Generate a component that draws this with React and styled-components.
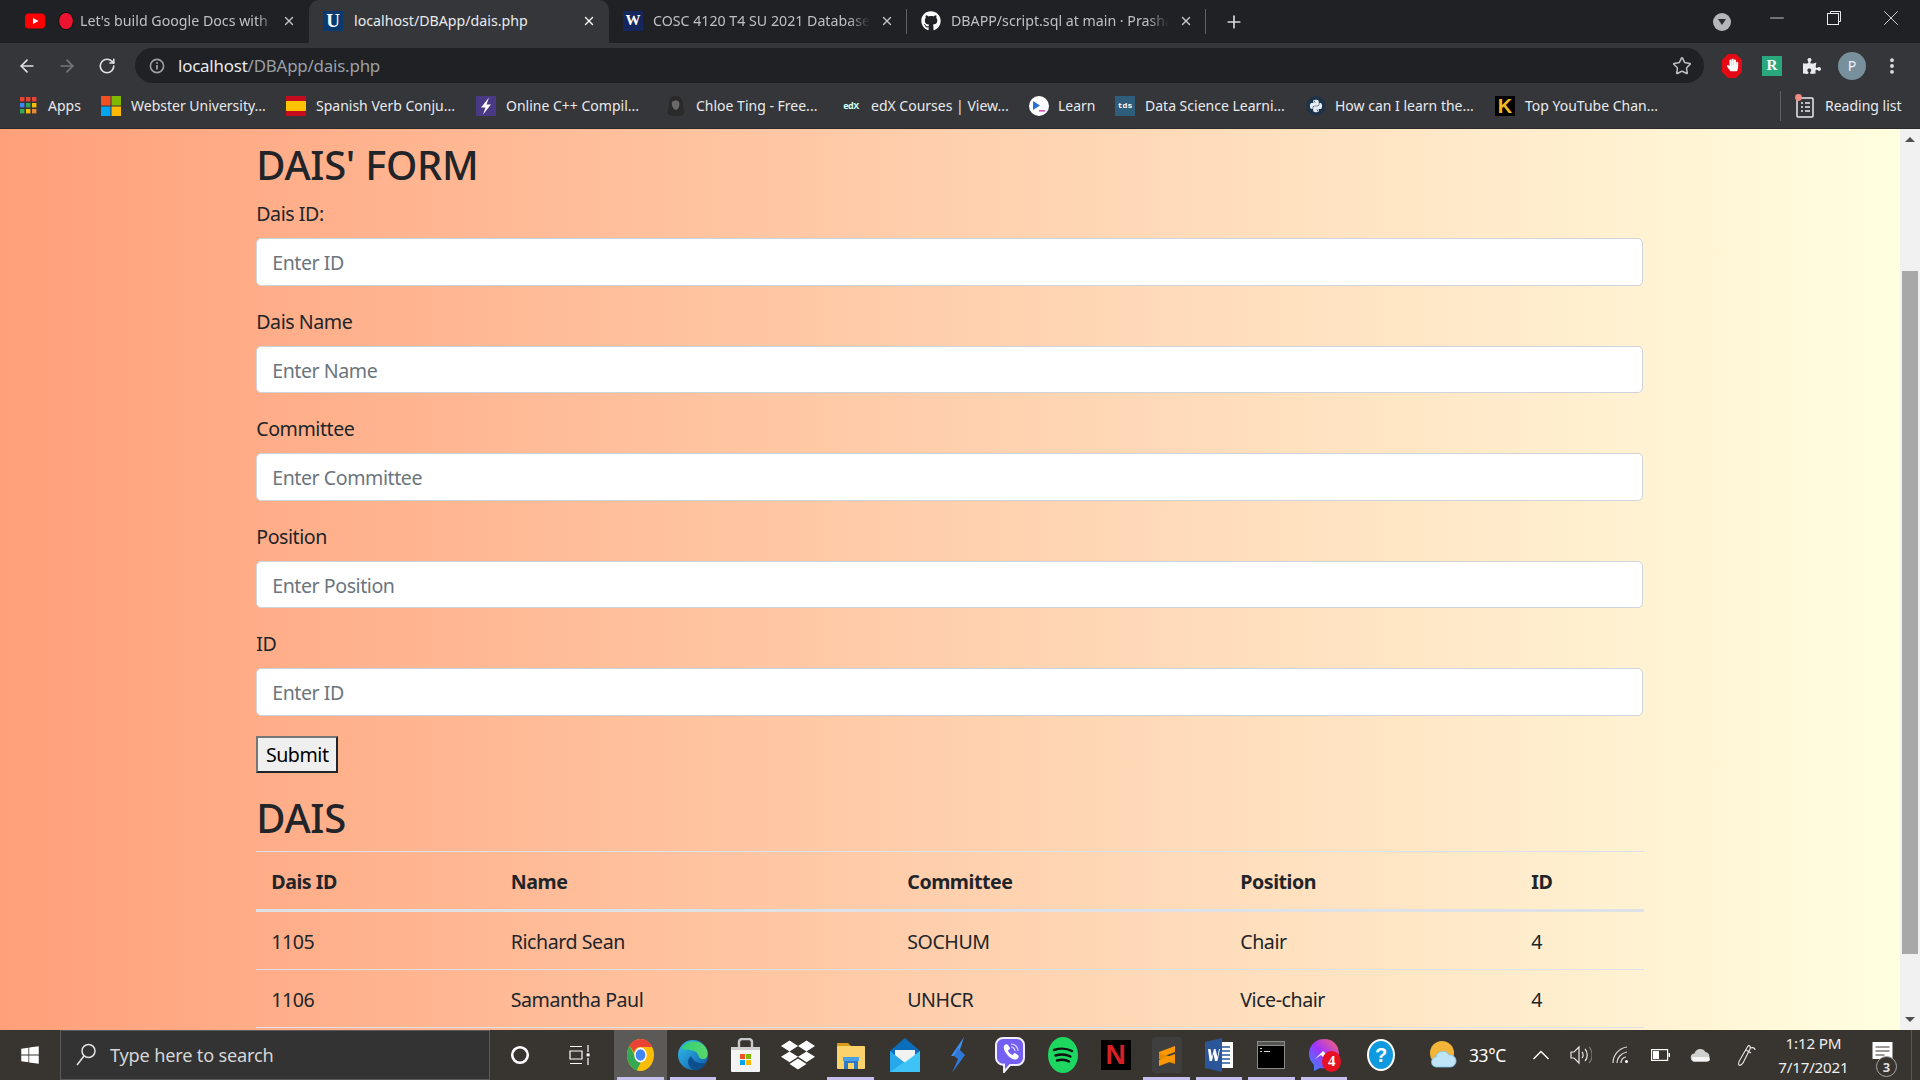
import React from "react";
import styled, { createGlobalStyle } from "styled-components";
import { ArrowLeft, ArrowRight, RotateCw, X, Plus, Minus, MoreVertical, Star } from "lucide-react";
import { FaGithub, FaPuzzlePiece, FaWindows, FaDropbox, FaPython, FaHandPaper } from "react-icons/fa";

const UI = `"Noto Sans", "Open Sans", Arial, sans-serif`;

const Global = createGlobalStyle`
  html, body { margin: 0; padding: 0; height: 100%; overflow: hidden; background: #202124; }
  #root { height: 100%; }
  * { box-sizing: border-box; }
`;

const Screen = styled.div`
  width: 1920px; height: 1080px; display: flex; flex-direction: column;
  font-family: ${UI}; overflow: hidden;
`;

/* ---- tab strip ---- */
const TabStrip = styled.div`
  height: 43px; flex: none; background: #202124; display: flex; align-items: stretch; padding-left: 11px;
`;
const Tab = styled.div`
  width: ${p => p.$w}px; flex: none; display: flex; align-items: center; gap: ${p => p.$gap}px;
  padding: 0 13px 2px 14px; position: relative;
  background: ${p => (p.$active ? "#35363a" : "transparent")};
  border-radius: ${p => (p.$active ? "10px 10px 0 0" : "0")};
  color: ${p => (p.$active ? "#e8eaed" : "#bdc1c6")};
  font-size: 14.2px;
  &::after {
    content: ""; position: absolute; right: 0; top: 9px; height: 25px; width: 1px;
    background: ${p => (p.$sep ? "#5f6368" : "transparent")};
  }
`;
const TabIcons = styled.span`flex: none; display: flex; align-items: center; gap: 13px;`;
const TabTitle = styled.span`
  flex: 1; min-width: 0; white-space: nowrap;
  -webkit-mask-image: ${p => (p.$fade ? "linear-gradient(to right, #000 90%, transparent)" : "none")};
`;
const TabClose = styled.span`
  flex: none; width: 14px; height: 14px; display: flex; align-items: center; justify-content: center;
  color: ${p => (p.$active ? "#fff" : "#c4c7cc")};
`;
const NewTab = styled.div`
  width: 28px; height: 43px; margin-left: 14px; color: #d5d7da; display: flex; align-items: center; justify-content: center;
`;
const Spacer = styled.div`flex: 1;`;
const DropCircle = styled.div`
  width: 18px; height: 18px; border-radius: 50%; background: #b4b6b9; margin: 13px 17px 0 0;
  display: flex; align-items: center; justify-content: center;
  &::after { content: ""; border: 4px solid transparent; border-top: 6px solid #2b2c2f; border-bottom: 0; }
`;
const WinButton = styled.div`
  width: 57.3px; height: 36px; color: #e8eaed; display: flex; align-items: center; justify-content: center;
`;

/* ---- toolbar ---- */
const Toolbar = styled.div`
  height: 40px; flex: none; background: #35363a; display: flex; padding: 5px 8px 0 7px;
`;
const ToolButton = styled.div`
  width: 40px; height: 35px; flex: none; display: flex; align-items: center; justify-content: center;
  color: ${p => p.$color || "#dee1e6"};
`;
const Omnibox = styled.div`
  flex: 1; height: 35px; margin: 0 8px; background: #202124; border-radius: 18px;
  display: flex; align-items: center; padding: 0 12px 0 14px; gap: 13px;
`;
const Url = styled.div`
  flex: 1; font-size: 16.9px; color: #9aa0a6; white-space: nowrap;
  letter-spacing: -0.2px;
  b { font-weight: 400; color: #e8eaed; }
`;
const Avatar = styled.div`
  width: 28px; height: 28px; border-radius: 50%; background: #78909c; color: #eef; font-size: 14px;
  display: flex; align-items: center; justify-content: center;
`;

/* ---- bookmarks ---- */
const Bookmarks = styled.div`
  height: 46px; flex: none; background: #35363a; border-bottom: 1px solid #2a2a2c;
  display: flex; align-items: center; padding-left: 20px;
`;
const Bookmark = styled.div`
  width: ${p => p.$w}px; flex: none; display: flex; align-items: center; gap: ${p => p.$gap || 10}px;
  font-size: 14px; color: #e8eaed; white-space: nowrap;
`;
const BarDivider = styled.div`
  width: 1px; height: 30px; background: #5f6368; margin: 0 14px 0 auto;
`;
const Badge = styled.span`
  width: ${p => p.$s || 20}px; height: ${p => p.$s || 20}px; flex: none; display: inline-flex; align-items: center; justify-content: center;
  background: ${p => p.$bg}; color: ${p => p.$fg || "#fff"};
  font-family: ${p => p.$font || `"Liberation Serif", serif`}; font-weight: 700;
  font-size: ${p => p.$fs || 16}px; line-height: 1; letter-spacing: ${p => p.$ls || 0}px;
  border-radius: ${p => p.$r || 0}px;
`;

/* ---- page ---- */
const Body = styled.div`
  flex: 1; min-height: 0; display: flex; overflow: hidden;
`;
const Page = styled.main`
  flex: 1; min-width: 0; overflow: hidden; padding: 11px 257px 0 256.25px;
  background: linear-gradient(to right, #ffa07a, #ffffe0);
  color: #212529; font-size: 19.6px; line-height: 30px; letter-spacing: -0.45px;
`;
const Heading = styled.h2`
  margin: ${p => p.$top || 0}px 0 9px; padding-top: 1px; font-size: 40px; line-height: 48px; font-weight: 500; color: #212529;
  letter-spacing: -0.3px;
`;
const Group = styled.div`margin-bottom: 20px;`;
const Label = styled.label`display: block; padding-top: 1px; margin-bottom: 9px;`;
const Input = styled.input`
  display: block; width: 100%; height: 47.5px; padding: 2px 15px 0; background: #fff;
  border: 1px solid #ced4da; border-radius: 5px; font: inherit; color: #495057; outline: 0;
  letter-spacing: inherit;
  &::placeholder { color: #6c757d; opacity: 1; }
`;
const Submit = styled.button`
  display: block; width: 82px; height: 37px; padding: 2px 0 0; background: #efefef; color: #000;
  border-style: solid; border-width: 2px; border-color: #767676 #212529 #212529 #767676;
  font: inherit; line-height: 30px; letter-spacing: inherit;
`;
const Table = styled.table`
  width: 100%; table-layout: fixed; border-collapse: separate; border-spacing: 0;
`;
const Col = styled.col`width: ${p => p.$w}px;`;
const Th = styled.th`
  height: 61px; padding: 4px 15px 0; text-align: left; font-weight: 700;
  border-top: 1px solid #dee2e6; border-bottom: 3px solid #dee2e6;
`;
const Td = styled.td`
  height: 58px; padding: 4px 15px 0; border-bottom: 1px solid #dee2e6;
`;

/* ---- scrollbar ---- */
const Scrollbar = styled.div`
  width: 20px; flex: none; background: #f1f1f1; display: flex; flex-direction: column; align-items: center;
`;
const ScrollArrow = styled.div`
  height: ${p => p.$h}px; flex: none; display: flex; align-items: center; justify-content: center;
  &::after {
    content: ""; border: 5px solid transparent; border-bottom-width: 0;
    border-top: 5px solid #505050; transform: ${p => (p.$up ? "rotate(180deg)" : "none")};
  }
`;
const ScrollTrack = styled.div`flex: 1; width: 100%; padding: 122px 1px 54px;`;
const ScrollThumb = styled.div`height: 100%; background: #a8a8a8; margin: 0 1px;`;

/* ---- taskbar ---- */
const Taskbar = styled.div`
  height: 50px; flex: none; background: #38342f; display: flex; align-items: stretch; color: #fff;
`;
const StartSlot = styled.div`
  width: ${p => p.$w}px; flex: none; display: flex; align-items: center; justify-content: center;
`;
const SearchBox = styled.div`
  width: 430px; flex: none; background: #333; border: 1px solid #5a5a5a; display: flex; align-items: center;
  padding-left: 15px; gap: 14px; color: #d6d6d6; font-size: 18.2px; letter-spacing: -0.2px;
`;
const AppSlots = styled.div`display: flex; margin-left: 4px;`;
const AppSlot = styled.div`
  width: 52.6px; flex: none; display: flex; align-items: center; justify-content: center; position: relative;
  padding-left: ${p => p.$nudge || 0}px;
  background: ${p => (p.$active ? "#5c5a56" : "transparent")};
  &::after {
    content: ""; position: absolute; left: 3px; right: 3px; bottom: 0; height: 3px;
    background: ${p => (p.$open ? "#c6c0ee" : "transparent")};
  }
`;
const Count = styled.span`
  position: absolute; right: 9px; bottom: 8px; width: 19px; height: 21px; border-radius: 50%;
  background: #e81123; color: #fff; font-family: "Liberation Serif", serif; font-weight: 700; font-size: 15px;
  display: flex; align-items: center; justify-content: center;
`;
const Tray = styled.div`flex: 1; display: flex; align-items: center; padding-left: 27px;`;
const Weather = styled.div`
  width: 91px; flex: none; display: flex; align-items: center; gap: 12px; font-size: 17.4px; letter-spacing: -0.3px;
`;
const TrayItem = styled.div`
  width: ${p => p.$w || 40}px; flex: none; height: 100%; display: flex; align-items: center; justify-content: center;
  padding-left: ${p => p.$nudge || 0}px;
`;
const Clock = styled.div`
  width: 95px; flex: none; text-align: center; font-size: 15.2px; line-height: 24px; color: #eee; letter-spacing: -0.2px;
`;
const Notify = styled.div`
  width: 50px; flex: none; height: 100%; position: relative; display: flex; align-items: center; justify-content: center;
`;
const NotifyCount = styled.span`
  position: absolute; left: 15px; top: 26px; width: 21px; height: 21px; border-radius: 50%;
  border: 1px solid #aaa; background: #38342f; font-size: 13px; font-weight: 700; color: #ddd;
  display: flex; align-items: center; justify-content: center;
`;
const DesktopEdge = styled.div`width: 1px; height: 100%; background: #5a5753; margin-left: 0;`;

/* ---- drawn icons ---- */
const YouTube = () => (
  <svg width="20" height="20" viewBox="0 0 20 20"><rect y="2.5" width="20" height="15" rx="3.5" fill="#f00"/><path d="M8 7l5.5 3L8 13z" fill="#fff"/></svg>
);
const RedDot = () => (
  <svg width="16" height="20" viewBox="0 0 16 20"><ellipse cx="8" cy="10" rx="7.4" ry="8.6" fill="#ec1330" stroke="#111" strokeWidth="1"/></svg>
);
const Info = () => (
  <svg width="16" height="16" viewBox="0 0 16 16" fill="none" style={{ flex: "none" }}><circle cx="8" cy="8" r="6.6" stroke="#9aa0a6" strokeWidth="1.6"/><path d="M8 7v4.4" stroke="#9aa0a6" strokeWidth="1.8"/><circle cx="8" cy="5" r="1" fill="#9aa0a6"/></svg>
);
const Adblock = () => (
  <svg width="20" height="24" viewBox="0 0 20 24"><path d="M6 0h8l6 6v12l-6 6H6l-6-6V6z" fill="#e50914"/><g transform="translate(4 4.5)"><FaHandPaper color="#fff" size={13}/></g></svg>
);
const Apps = () => (
  <svg width="17" height="17" viewBox="0 0 17 17">
    {[["#ea4335","#ea4335","#ea4335"],["#4285f4","#34a853","#fbbc05"],["#34a853","#fbbc05","#ea8a35"]].map((r, i) =>
      r.map((c, j) => <rect key={`${i}${j}`} x={j * 6} y={i * 6} width="4.4" height="4.4" fill={c}/>))}
  </svg>
);
const MS = ({ s = 20 }) => (
  <svg width={s} height={s} viewBox="0 0 20 20"><rect width="9.5" height="9.5" fill="#f25022"/><rect x="10.5" width="9.5" height="9.5" fill="#7fba00"/><rect y="10.5" width="9.5" height="9.5" fill="#00a4ef"/><rect x="10.5" y="10.5" width="9.5" height="9.5" fill="#ffb900"/></svg>
);
const Spain = () => (
  <svg width="20" height="20" viewBox="0 0 20 20"><rect width="20" height="20" fill="#c60b1e"/><rect y="5" width="20" height="10" fill="#ffc400"/></svg>
);
const PurpleBolt = () => (
  <svg width="20" height="20" viewBox="0 0 20 20"><rect width="20" height="20" fill="#4a3a86"/><path d="M13 1.500L5 11.500h4.500l-2.500 7 8-10h-4.500z" fill="#fff"/></svg>
);
const Chloe = () => (
  <svg width="20" height="20" viewBox="0 0 20 20"><path d="M9 0c5 0 8 3 8 8 0 4 2 7 1 10-2 2-6 2-9 2-4 0-7-1-8-3 2-3 1-6 2-10 0-4 2-7 6-7z" fill="#2b2a2b"/><path d="M6 6c2-2 6-2 7 0 1 3 0 7-3 8-2 0-5-4-4-8z" fill="#6b6a6a"/></svg>
);
const Learn = () => (
  <svg width="20" height="20" viewBox="0 0 20 20"><circle cx="10" cy="10" r="10" fill="#fff"/><path d="M4 5l7 4.5L4 14z" fill="#2a6fd6"/><path d="M10 14h6v1.6h-6z" fill="#d44fc0"/></svg>
);
const Python = () => (
  <svg width="20" height="20" viewBox="0 0 20 20"><circle cx="10" cy="10" r="10" fill="#1e3347"/><g transform="translate(3 3)"><FaPython color="#e6eef5" size={14}/></g></svg>
);
const ReadingList = () => (
  <svg width="20" height="24" viewBox="0 0 20 24" fill="none">
    <rect x="2" y="4" width="16" height="19" rx="1" stroke="#e8eaed" strokeWidth="1.5"/>
    <path d="M6 9h2M10 9h5M6 13h2M10 13h5M6 17h2M10 17h5" stroke="#e8eaed" strokeWidth="1.5"/>
    <circle cx="3.5" cy="3.5" r="3.4" fill="#f28b82"/>
  </svg>
);
const SearchGlass = () => (
  <svg width="20" height="24" viewBox="0 0 20 24" fill="none" stroke="#e4e4e4" strokeWidth="1.5"><circle cx="12.5" cy="8" r="6.5"/><path d="M8 13L1 22"/></svg>
);
const Cortana = () => (
  <svg width="20" height="20" viewBox="0 0 20 20" fill="none"><circle cx="10" cy="10" r="7.8" stroke="#fff" strokeWidth="2.6"/></svg>
);
const TaskView = () => (
  <svg width="22" height="20" viewBox="0 0 22 20" fill="none" stroke="#fff" strokeWidth="1.2">
    <path d="M1 1.5h12M1 18.5h12M1 6h12v8H1zM19 0v7M19 13v7"/><rect x="17.6" y="8.4" width="3" height="3" fill="#fff" stroke="none"/>
  </svg>
);
const Chrome = () => (
  <svg width="27" height="32" viewBox="0 0 26 26" preserveAspectRatio="none">
    <circle cx="13" cy="13" r="13" fill="#fbbc05"/>
    <path d="M13 0a13 13 0 0 1 11.3 6.5H13a6.5 6.5 0 0 0-6.2 4.4L2.6 5.2A13 13 0 0 1 13 0z" fill="#ea4335"/>
    <path d="M2.6 5.2l5.8 10A6.5 6.5 0 0 0 13 19.500l-3.700 6A13 13 0 0 1 2.600 5.200z" fill="#34a853"/>
    <circle cx="13" cy="13" r="6" fill="#fff"/><circle cx="13" cy="13" r="4.700" fill="#4285f4"/>
  </svg>
);
const Edge = () => (
  <svg width="30" height="32" viewBox="0 0 30 32">
    <defs>
      <linearGradient id="eg1" x1="0" y1="0" x2="1" y2="1"><stop offset="0" stopColor="#35c1f1"/><stop offset="1" stopColor="#0c59a4"/></linearGradient>
      <linearGradient id="eg2" x1="0" y1="0" x2="1" y2="0"><stop offset="0" stopColor="#2fd07b"/><stop offset="1" stopColor="#5bd66a"/></linearGradient>
    </defs>
    <circle cx="15" cy="16" r="15" fill="url(#eg1)"/>
    <path d="M4 9C8 1 22 0 28 9c3 5 2 11-3 11-6 0-3-6-9-8-6-2-10 0-12-3z" fill="url(#eg2)"/>
    <path d="M16 31c-6-2-8-10-3-14 2 5 6 8 15 7-3 5-7 8-12 7z" fill="#0b4f8f"/>
  </svg>
);
const Store = () => (
  <svg width="29" height="34" viewBox="0 0 29 34" fill="none">
    <path d="M8 9V4a3 3 0 0 1 3-3h7a3 3 0 0 1 3 3v5" stroke="#c9c9c9" strokeWidth="2.400"/>
    <path d="M0 9h29v24a1 1 0 0 1-1 1H1a1 1 0 0 1-1-1z" fill="#f4f4f4"/><rect y="9" width="29" height="3" fill="#cfcfcf"/>
    <g transform="translate(9 16)"><rect width="5" height="5" fill="#f25022"/><rect x="6" width="5" height="5" fill="#7fba00"/><rect y="6" width="5" height="5" fill="#00a4ef"/><rect x="6" y="6" width="5" height="5" fill="#ffb900"/></g>
  </svg>
);
const Folder = () => (
  <svg width="28" height="28" viewBox="0 0 28 28">
    <path d="M0 2h11l3 3v3H0z" fill="#d99a1c"/><rect y="5" width="28" height="23" rx="1" fill="#fcd36a"/>
    <path d="M7 28v-9a2 2 0 0 1 2-2h10a2 2 0 0 1 2 2v9h-4v-6h-6v6z" fill="#2d7bc4"/><rect x="6" y="16" width="16" height="4" fill="#4aa0e6"/>
  </svg>
);
const Mail = () => (
  <svg width="30" height="34" viewBox="0 0 30 34">
    <path d="M0 13L15 0l15 13v21H0z" fill="#0a6ebd"/>
    <path d="M5 12h20v6l-10 7-10-7z" fill="#f2f2f2"/>
    <path d="M0 13l15 12 15-12v21H0z" fill="#28a8ea"/>
    <path d="M30 13v21H0z" fill="#50d9ff" opacity=".55"/>
  </svg>
);
const Bolt = () => (
  <svg width="18" height="36" viewBox="0 0 18 36">
    <path d="M15 0L2 19h7z" fill="#3f8ff0"/><path d="M9 11l7 7L3 36l6-14-4-3z" fill="#2f78d8"/>
  </svg>
);
const Viber = () => (
  <svg width="30" height="36" viewBox="0 0 30 36">
    <path d="M8 1h14a7 7 0 0 1 7 7v13a7 7 0 0 1-7 7h-7l-6 7v-7.400A7 7 0 0 1 1 21V8a7 7 0 0 1 7-7z" fill="#7360f2" stroke="#f0edff" strokeWidth="2"/>
    <path d="M9 9c1-2 3-2 4-1l2 3c0 1-1 2-2 2 0 2 3 5 5 5 0-1 1-2 2-2l3 2c1 1 1 3-1 4-5 3-15-8-13-13z" fill="#fff"/>
    <path d="M16 7c4 0 7 3 7 7M16 10c2 0 4 2 4 4" stroke="#dcd6ff" strokeWidth="1.200" fill="none"/>
  </svg>
);
const Spotify = () => (
  <svg width="30" height="36" viewBox="0 0 30 36" fill="none">
    <ellipse cx="15" cy="18" rx="15" ry="18" fill="#1ed760"/>
    <path d="M6 13c6-2 13-1.600 18 1M7.500 18.500c5-1.500 11-1 15 1M9 23.500c4-1 9-.8 12 1" stroke="#111" strokeWidth="2.400" strokeLinecap="round"/>
  </svg>
);
const Sublime = () => (
  <svg width="30" height="36" viewBox="0 0 30 36">
    <rect width="30" height="36" rx="3" fill="#3f3f3f"/>
    <path d="M7 15l16-6v6L7 21z" fill="#ff9800"/>
    <path d="M7 16l16 5v6L7 22z" fill="#e68a00"/>
    <path d="M7 22l16-5.500V27L7 29z" fill="#ff9800" opacity="0"/>
    <path d="M7 23l16-6v6L7 29z" fill="#ff9800"/>
  </svg>
);
const Word = () => (
  <svg width="28" height="34" viewBox="0 0 28 34">
    <rect x="10" y="4" width="18" height="26" fill="#fff"/>
    <path d="M14 9h11M14 13h11M14 17h11M14 21h11M14 25h11" stroke="#2b579a" strokeWidth="1.500"/>
    <path d="M0 4l17-4v34L0 30z" fill="#2b579a"/>
    <path d="M3 11h2.500l1.500 8 2-8h1.500l2 8 1.500-8H15l-2.600 12H10l-1.500-7L7 23H4.600z" fill="#fff"/>
  </svg>
);
const Cmd = () => (
  <svg width="28" height="28" viewBox="0 0 28 28">
    <rect width="28" height="28" fill="#8a8a8a"/><rect x="1" y="1" width="26" height="3" fill="#555"/><rect x="1" y="5" width="26" height="22" fill="#000"/>
    <path d="M3 7h2v1H3zM3 10h2v1H3zM7 10h6v1H7z" fill="#ddd"/>
  </svg>
);
const Messenger = () => (
  <svg width="32" height="36" viewBox="0 0 32 36">
    <defs><linearGradient id="ms" x1="0" y1="1" x2="1" y2="0"><stop offset="0" stopColor="#2f8fff"/><stop offset=".5" stopColor="#a033ff"/><stop offset="1" stopColor="#ff6968"/></linearGradient></defs>
    <path d="M16 2C7 2 1 9 1 17c0 4 2 8 5 11v6l6-3c10 2 19-5 19-14S25 2 16 2z" fill="url(#ms)"/>
    <path d="M7 22l8-8 4 4 6-4-8 8-4-4z" fill="#fff"/>
  </svg>
);
const Help = () => (
  <svg width="28" height="32" viewBox="0 0 28 32">
    <ellipse cx="14" cy="16" rx="13" ry="15" fill="#0f9ae0" stroke="#fff" strokeWidth="2"/>
    <text x="14" y="23" textAnchor="middle" fontFamily="Liberation Sans" fontWeight="700" fontSize="20" fill="#fff">?</text>
  </svg>
);
const WeatherIcon = () => (
  <svg width="27" height="28" viewBox="0 0 27 28">
    <circle cx="12" cy="12" r="12" fill="#f4b43a"/>
    <path d="M7 26a5 5 0 0 1-1-10 7 7 0 0 1 13-2 6 6 0 0 1 2 12z" fill="#bfe4f7" stroke="#7cc4ea" strokeWidth=".8"/>
  </svg>
);
const Chevron = () => (
  <svg width="16" height="10" viewBox="0 0 16 10" fill="none" stroke="#fff" strokeWidth="1.400"><path d="M.5 9L8 1.500 15.500 9"/></svg>
);
const Speaker = () => (
  <svg width="22" height="20" viewBox="0 0 22 20" fill="none" stroke="#e8e8e8" strokeWidth="1.200">
    <path d="M1 7h3l5-5v16l-5-5H1z"/><path d="M12 7c1.500 1.500 1.500 4.500 0 6M15 4c3 3 3 9 0 12" /><path d="M19 2c4 4 4 12 0 16" stroke="#777"/>
  </svg>
);
const Wifi = () => (
  <svg width="18" height="18" viewBox="0 0 18 18" fill="none" stroke="#ddd" strokeWidth="1.200">
    <path d="M1 17C1 9 7 2 15 1M5 17c0-5 4-10 10-11M9 17c0-3 2-6 5-6"/><circle cx="14.500" cy="15.500" r="1.500" fill="#fff" stroke="none"/>
  </svg>
);
const Battery = () => (
  <svg width="19" height="12" viewBox="0 0 19 12"><rect x=".6" y=".6" width="16" height="10.800" fill="none" stroke="#fff" strokeWidth="1.200"/><rect x="2" y="2" width="6" height="8" fill="#fff"/><rect x="17.500" y="4" width="1.500" height="4" fill="#fff"/></svg>
);
const CloudIcon = () => (
  <svg width="21" height="14" viewBox="0 0 21 14"><path d="M5 13.500a4 4 0 0 1-.5-8 6 6 0 0 1 11-1.500 5 5 0 0 1 1 9.500z" fill="#cfcfcf"/><path d="M2 9h17l1 3-2 1.500H3z" fill="#f5f5f5"/></svg>
);
const Pen = () => (
  <svg width="20" height="24" viewBox="0 0 20 24" fill="none" stroke="#e8e8e8" strokeWidth="1.100">
    <path d="M11 3L4 15c-2 3-3 6-2 7s4-1 5-4l6-12c1-3-1-4-2-3z"/><path d="M13 5c3-1 5 0 5 2M9 7l5 3"/>
  </svg>
);
const NotifyIcon = () => (
  <svg width="21" height="20" viewBox="0 0 20 20" style={{ marginRight: 6, marginTop: -7 }}><path d="M0 0h20v17H0z" fill="#fff"/><path d="M3 5h14M3 9h14M3 13h9" stroke="#38342f" strokeWidth="1.200"/></svg>
);

const tabs = [
  { w: 298, gap: 6, icons: [<YouTube key="y"/>, <RedDot key="r"/>], title: "Let's build Google Docs with", fade: true },
  { w: 300, gap: 11, active: true, icons: [<Badge key="u" $bg="#0b3a6f" $fs={19}>U</Badge>], title: "localhost/DBApp/dais.php" },
  { w: 298, gap: 10, sep: true, icons: [<Badge key="w" $bg="#14265c" $fs={15}>W</Badge>], title: "COSC 4120 T4 SU 2021 Database", fade: true },
  { w: 299, gap: 10, sep: true, icons: [<FaGithub key="g" size={20} color="#fff"/>], title: "DBAPP/script.sql at main · Prasha", fade: true },
];

const marks = [
  { w: 81, gap: 11, icon: <Apps/>, text: "Apps" },
  { w: 185, icon: <MS/>, text: "Webster University..." },
  { w: 190, gap: 10, icon: <Spain/>, text: "Spanish Verb Conju..." },
  { w: 190, gap: 10, icon: <PurpleBolt/>, text: "Online C++ Compil..." },
  { w: 176, gap: 10, icon: <Chloe/>, text: "Chloe Ting - Free..." },
  { w: 187, gap: 11, icon: <Badge $s={18} $bg="#35363a" $fg="#cfe" $font={UI} $fs={9} $ls={-0.5}>edX</Badge>, text: "edX Courses | View..." },
  { w: 86, gap: 9, icon: <Learn/>, text: "Learn" },
  { w: 191, icon: <Badge $bg="#2f5d7c" $font={`"Liberation Mono", monospace`} $fs={8}>tds</Badge>, text: "Data Science Learni..." },
  { w: 189, gap: 9, icon: <Python/>, text: "How can I learn the..." },
  { w: 200, icon: <Badge $bg="#000" $fg="#f4bb1c" $font={`"Liberation Sans", sans-serif`} $fs={20}>K</Badge>, text: "Top YouTube Chan..." },
];

const fields = [
  ["Dais ID:", "Enter ID"],
  ["Dais Name", "Enter Name"],
  ["Committee", "Enter Committee"],
  ["Position", "Enter Position"],
  ["ID", "Enter ID"],
];
const rows = [
  ["1105", "Richard Sean", "SOCHUM", "Chair", "4"],
  ["1106", "Samantha Paul", "UNHCR", "Vice-chair", "4"],
];
const apps = [
  { el: <Chrome/>, active: true, open: true },
  { el: <Edge/>, open: true },
  { el: <Store/> },
  { el: <FaDropbox size={34} color="#fff"/> },
  { el: <Folder/>, open: true },
  { el: <Mail/>, nudge: 4 },
  { el: <Bolt/>, nudge: 4 },
  { el: <Viber/>, nudge: 4 },
  { el: <Spotify/>, nudge: 4 },
  { el: <Badge $s={30} $bg="#000" $fg="#d81f26" $font={`"Liberation Sans", sans-serif`} $fs={28}>N</Badge>, nudge: 4 },
  { el: <Sublime/>, open: true, nudge: 2 },
  { el: <Word/>, open: true },
  { el: <Cmd/>, open: true },
  { el: <Messenger/>, open: true, count: 4 },
  { el: <Help/>, nudge: 9 },
];

export default function App() {
  return (
    <Screen>
      <Global/>
      <TabStrip>
        {tabs.map(t => (
          <Tab key={t.title} $w={t.w} $active={t.active} $sep={t.sep} $gap={t.gap}>
            <TabIcons>{t.icons}</TabIcons>
            <TabTitle $fade={t.fade}>{t.title}</TabTitle>
            <TabClose $active={t.active}><X size={14} strokeWidth={2.4}/></TabClose>
          </Tab>
        ))}
        <NewTab><Plus size={20} strokeWidth={2}/></NewTab>
        <Spacer/>
        <DropCircle/>
        <WinButton><Minus size={22} strokeWidth={0.9}/></WinButton>
        <WinButton>
          <svg width="14" height="14" viewBox="0 0 14 14" fill="none" stroke="currentColor"><path d="M3.500 2.500V.5h10v10h-2"/><rect x=".5" y="2.500" width="11" height="11"/></svg>
        </WinButton>
        <WinButton><X size={26} strokeWidth={0.8}/></WinButton>
      </TabStrip>

      <Toolbar>
        <ToolButton><ArrowLeft size={20} strokeWidth={2}/></ToolButton>
        <ToolButton $color="#75777b"><ArrowRight size={20} strokeWidth={2}/></ToolButton>
        <ToolButton><RotateCw size={18} strokeWidth={2.2}/></ToolButton>
        <Omnibox>
          <Info/>
          <Url><b>localhost</b>/DBApp/dais.php</Url>
          <Star size={20} strokeWidth={1.8} color="#bdc1c6"/>
        </Omnibox>
        <ToolButton><Adblock/></ToolButton>
        <ToolButton><Badge $bg="#28a87c" $fs={15}>R</Badge></ToolButton>
        <ToolButton><FaPuzzlePiece size={18} color="#e8eaed"/></ToolButton>
        <ToolButton><Avatar>P</Avatar></ToolButton>
        <ToolButton><MoreVertical size={20} strokeWidth={2.6}/></ToolButton>
      </Toolbar>

      <Bookmarks>
        {marks.map(m => (
          <Bookmark key={m.text} $w={m.w} $gap={m.gap}>{m.icon}<span>{m.text}</span></Bookmark>
        ))}
        <BarDivider/>
        <Bookmark $w={125} $gap={10}><ReadingList/><span>Reading list</span></Bookmark>
      </Bookmarks>

      <Body>
        <Page>
          <Heading>DAIS' FORM</Heading>
          <form>
            {fields.map(([label, ph], i) => (
              <Group key={i}>
                <Label>{label}</Label>
                <Input placeholder={ph}/>
              </Group>
            ))}
            <Submit type="button">Submit</Submit>
          </form>
          <Heading $top={20}>DAIS</Heading>
          <Table>
            <colgroup>
              {[239.5, 396.5, 333, 291, 127.5].map(w => <Col key={w} $w={w}/>)}
            </colgroup>
            <thead>
              <tr>{["Dais ID", "Name", "Committee", "Position", "ID"].map(h => <Th key={h}>{h}</Th>)}</tr>
            </thead>
            <tbody>
              {rows.map(r => <tr key={r[0]}>{r.map((c, i) => <Td key={i}>{c}</Td>)}</tr>)}
            </tbody>
          </Table>
        </Page>
        <Scrollbar>
          <ScrollArrow $up $h={20}/>
          <ScrollTrack><ScrollThumb/></ScrollTrack>
          <ScrollArrow $h={22}/>
        </Scrollbar>
      </Body>

      <Taskbar>
        <StartSlot $w={60}><FaWindows size={20} color="#fff"/></StartSlot>
        <SearchBox><SearchGlass/><span>Type here to search</span></SearchBox>
        <StartSlot $w={60}><Cortana/></StartSlot>
        <StartSlot $w={60}><TaskView/></StartSlot>
        <AppSlots>
          {apps.map((a, i) => (
            <AppSlot key={i} $active={a.active} $open={a.open} $nudge={a.nudge}>
              {a.el}
              {a.count ? <Count>{a.count}</Count> : null}
            </AppSlot>
          ))}
        </AppSlots>
        <Tray>
          <Weather><WeatherIcon/><span>33°C</span></Weather>
          <TrayItem $w={40}><Chevron/></TrayItem>
          <TrayItem $w={40}><Speaker/></TrayItem>
          <TrayItem $w={40}><Wifi/></TrayItem>
          <TrayItem $w={40}><Battery/></TrayItem>
          <TrayItem $w={40}><CloudIcon/></TrayItem>
          <TrayItem $w={45} $nudge={8}><Pen/></TrayItem>
          <Clock>1:12 PM<br/>7/17/2021</Clock>
          <Notify><NotifyIcon/><NotifyCount>3</NotifyCount></Notify>
          <DesktopEdge/>
        </Tray>
      </Taskbar>
    </Screen>
  );
}
